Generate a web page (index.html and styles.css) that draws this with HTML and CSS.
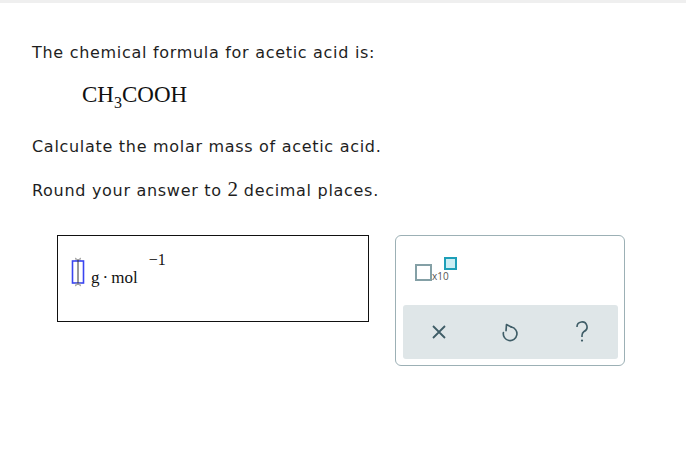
FILE: index.html
```html
<!DOCTYPE html>
<html>
<head>
<meta charset="utf-8">
<link rel="stylesheet" href="styles.css">
</head>
<body>
<div class="topbar"></div>
<main class="q">
  <p class="line l1">The chemical formula for acetic acid is:</p>
  <p class="formula">CH<span class="sub">3</span>COOH</p>
  <p class="line l2">Calculate the molar mass of acetic acid.</p>
  <p class="line l3">Round your answer to <span class="num">2</span> decimal places.</p>
  <div class="row">
    <div class="answer">
      <svg class="slot" width="16" height="30" viewBox="0 0 16 30">
        <path d="M5 1 L8 3 L11 1 M5 3 L11 3" stroke="#999" stroke-width="1" fill="none"/>
        <rect x="2.5" y="4" width="11" height="22" fill="none" stroke="#3a45f0" stroke-width="1.6"/>
        <line x1="8" y1="3" x2="8" y2="27" stroke="#333" stroke-width="1"/>
        <path d="M5 29 L8 27 L11 29 M5 27 L11 27" stroke="#999" stroke-width="1" fill="none"/>
      </svg>
      <span class="unit">g<span class="dot">·</span>mol</span><span class="sup">−1</span>
    </div>
    <div class="panel">
      <div class="tools">
        <div class="x10">
          <span class="box"></span><span class="x10t">x10</span><span class="exp"></span>
        </div>
      </div>
      <div class="actions">
        <div class="act">
          <svg width="16" height="16" viewBox="0 0 16 16"><path d="M2 2 L14 14 M14 2 L2 14" stroke="#3f5d67" stroke-width="1.8" fill="none"/></svg>
        </div>
        <div class="act">
          <svg width="20" height="22" viewBox="0 0 18 20"><path d="M5.4 8.8 L5.8 3.2 L10.2 5.5" stroke="#3f5d67" stroke-width="1.5" fill="none" stroke-linejoin="round" stroke-linecap="round"/><path d="M10.2 5.5 A6.2 6.2 0 1 1 3 10.5" stroke="#3f5d67" stroke-width="1.5" fill="none" stroke-linecap="round"/></svg>
        </div>
        <div class="act">
          <svg width="14" height="22" viewBox="0 0 14 22"><path d="M2 6 A5 5 0 1 1 9 10.5 C7.5 11.5 7 12.5 7 14.5 V16" stroke="#3f5d67" stroke-width="1.6" fill="none"/><circle cx="7" cy="19.6" r="1.1" fill="#3f5d67"/></svg>
        </div>
      </div>
    </div>
  </div>
</main>
</body>
</html>
```
FILE: styles.css
```css
html, body { margin: 0; padding: 0; background: #fff; }
.topbar { height: 3px; background: #efefef; }
.q { padding: 0 0 0 32px; }
.line {
  font-family: "DejaVu Sans", Verdana, sans-serif;
  font-size: 16px;
  line-height: 20px;
  letter-spacing: 0.7px;
  color: #1e1e1e;
  margin: 0;
}
.l1 { margin-top: 40px; }
.formula {
  font-family: "Liberation Serif", "Times New Roman", serif;
  font-size: 23px;
  line-height: 26px;
  margin: 19px 0 0 50px;
  color: #111;
}
.sub { font-size: 16px; line-height: 0; vertical-align: -6px; }
.l2 { margin-top: 29px; }
.l3 { margin-top: 23px; }
.num {
  font-family: "Liberation Serif", "Times New Roman", serif;
  font-size: 21px;
  line-height: 18px;
  letter-spacing: 0;
}
.row { display: flex; align-items: flex-start; margin-top: 34px; margin-left: 25px; }
.answer {
  box-sizing: border-box;
  width: 312px;
  height: 87px;
  border: 1px solid #111;
  display: flex;
  align-items: flex-start;
  padding: 20px 0 0 12px;
  font-family: "Liberation Serif", "Times New Roman", serif;
  color: #111;
}
.slot { display: block; margin-top: 1px; }
.unit { font-size: 17px; line-height: 20px; margin-left: 5px; margin-top: 12px; }
.dot { margin: 0 3px; }
.sup { font-size: 16px; line-height: 16px; margin-left: 11px; margin-top: -4px; }
.panel {
  box-sizing: border-box;
  margin-left: 26px;
  width: 230px;
  height: 131px;
  border: 1px solid #9cb0b5;
  border-radius: 6px;
  padding: 0 6px 6px 7px;
  display: flex;
  flex-direction: column;
}
.tools { flex: 1; padding: 21px 0 0 12px; }
.x10 { display: flex; align-items: flex-start; }
.box {
  box-sizing: border-box;
  width: 17px; height: 17px;
  border: 2px solid #84a0a6;
  margin-top: 7px;
}
.x10t {
  font-family: "Open Sans", "DejaVu Sans", sans-serif;
  font-size: 10px;
  color: #555;
  margin-top: 13px;
  line-height: 12px;
}
.exp {
  box-sizing: border-box;
  width: 13px; height: 13px;
  border: 2px solid #1d9fb8;
  background: #cbeef4;
  margin-left: -5px;
}
.actions {
  height: 54px;
  background: #dfe6e8;
  border-radius: 3px;
  display: grid;
  grid-template-columns: 1fr 1fr 1fr;
  align-items: center;
  justify-items: center;
}
.act { display: flex; align-items: center; justify-content: center; }
.act svg { display: block; }
```
